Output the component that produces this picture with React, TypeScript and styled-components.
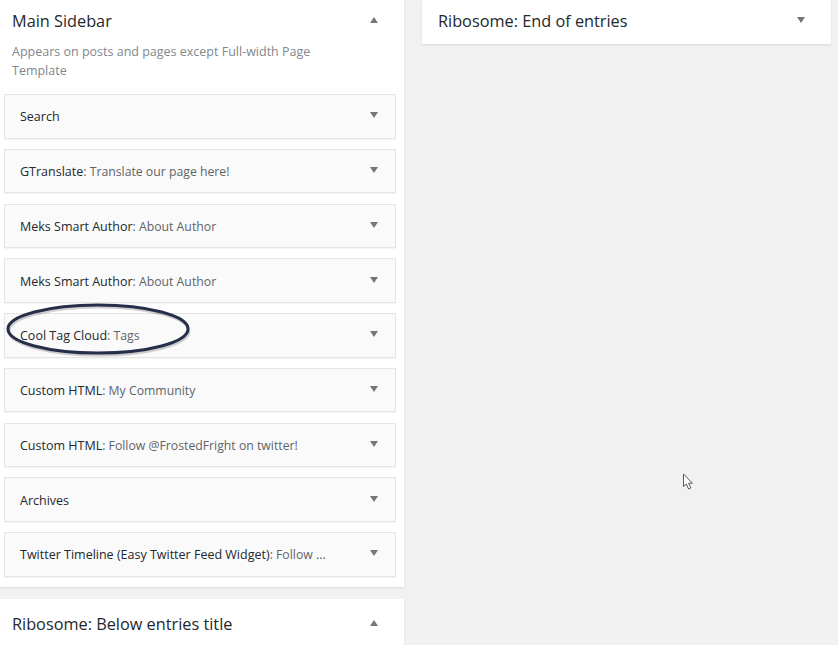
import React from 'react';
import styled, { createGlobalStyle } from 'styled-components';

const GlobalStyle = createGlobalStyle`
  html, body {
    margin: 0;
    padding: 0;
    height: 100%;
    background: #f1f1f1;
    overflow: hidden;
  }
  body {
    font-family: 'Open Sans', 'Noto Sans', sans-serif;
  }
`;

const Page = styled.div`
  position: relative;
  display: grid;
  grid-template-columns: 404px 409px;
  column-gap: 18px;
  align-items: start;
  width: 838px;
  height: 645px;
  overflow: hidden;
`;

const Column = styled.div`
  display: flex;
  flex-direction: column;
  gap: 12px;
`;

const Panel = styled.section`
  background: #fff;
  box-shadow: 0 1px 2px rgba(0, 0, 0, 0.1);
`;

const PanelHeader = styled.div<{ $height: number; $inset?: number }>`
  display: flex;
  align-items: center;
  justify-content: space-between;
  height: ${({ $height }) => $height}px;
  padding: 0 26px ${({ $inset }) => $inset ?? 0}px ${({ $inset }) => ($inset ? 16 : 12)}px;
  box-sizing: border-box;
`;

const PanelTitle = styled.h2`
  margin: 0;
  font-size: 16.3px;
  font-weight: 400;
  color: #23282d;
`;

const Description = styled.p`
  margin: 0;
  padding: 0 12px;
  max-width: 320px;
  font-size: 12.5px;
  line-height: 19px;
  color: #82878c;
`;

const WidgetList = styled.div`
  display: flex;
  flex-direction: column;
  gap: 10.25px;
  padding: 14px 8px 10px 4px;
`;

const Widget = styled.div`
  display: flex;
  align-items: center;
  justify-content: space-between;
  height: 44.5px;
  box-sizing: border-box;
  padding: 0 17px 0 15px;
  background: #fafafa;
  border: 1px solid #e5e5e5;
  box-shadow: 0 1px 1px rgba(0, 0, 0, 0.04);
`;

const WidgetLabel = styled.span`
  color: #5f6468;
  font-size: 12.25px;
  white-space: nowrap;
  padding-top: 1px;
`;

const WidgetName = styled.span`
  color: #23282d;
  font-size: 12.5px;
  font-weight: 500;
`;

const Arrow = styled.span<{ $up?: boolean }>`
  width: 0;
  height: 0;
  border-left: 4.5px solid transparent;
  border-right: 4.5px solid transparent;
  ${({ $up }) =>
    $up ? 'border-bottom: 6px solid #72777c;' : 'border-top: 6px solid #72777c;'}
  margin-top: -2px;
`;

const Ellipse = styled.svg`
  position: absolute;
  left: 2px;
  top: 300px;
`;

const Cursor = styled.svg`
  position: absolute;
  left: 680px;
  top: 471px;
`;

const widgets = [
  { name: 'Search' },
  { name: 'GTranslate', title: 'Translate our page here!' },
  { name: 'Meks Smart Author', title: 'About Author' },
  { name: 'Meks Smart Author', title: 'About Author' },
  { name: 'Cool Tag Cloud', title: 'Tags' },
  { name: 'Custom HTML', title: 'My Community' },
  { name: 'Custom HTML', title: 'Follow @FrostedFright on twitter!' },
  { name: 'Archives' },
  { name: 'Twitter Timeline (Easy Twitter Feed Widget)', title: 'Follow ...' },
];

const App: React.FC = () => (
  <Page>
    <GlobalStyle />
    <Column>
      <Panel>
        <PanelHeader $height={42}>
          <PanelTitle>Main Sidebar</PanelTitle>
          <Arrow $up />
        </PanelHeader>
        <Description>Appears on posts and pages except Full-width Page Template</Description>
        <WidgetList>
          {widgets.map((widget, index) => (
            <Widget key={index}>
              <WidgetLabel>
                <WidgetName>{widget.name}</WidgetName>
                {widget.title ? `: ${widget.title}` : ''}
              </WidgetLabel>
              <Arrow />
            </Widget>
          ))}
        </WidgetList>
      </Panel>
      <Panel>
        <PanelHeader $height={50}>
          <PanelTitle>Ribosome: Below entries title</PanelTitle>
          <Arrow $up />
        </PanelHeader>
      </Panel>
    </Column>
    <Column>
      <Panel>
        <PanelHeader $height={44} $inset={2}>
          <PanelTitle>Ribosome: End of entries</PanelTitle>
          <Arrow />
        </PanelHeader>
      </Panel>
    </Column>
    <Ellipse width="194" height="60" viewBox="0 0 194 60">
      <ellipse cx="97" cy="31" rx="90" ry="24" fill="none" stroke="rgba(0,0,0,0.18)" strokeWidth="3" />
      <ellipse cx="96" cy="29" rx="90" ry="24" fill="none" stroke="#262f4a" strokeWidth="3" />
    </Ellipse>
    <Cursor width="16" height="22" viewBox="0 0 16 22">
      <path
        d="M3.5 3 V15.5 L6.3 13 L8.6 18 L10.8 17 L8.6 12.2 H12.4 Z"
        fill="#fff"
        stroke="#55585c"
        strokeWidth="1"
      />
    </Cursor>
  </Page>
);

export default App;
